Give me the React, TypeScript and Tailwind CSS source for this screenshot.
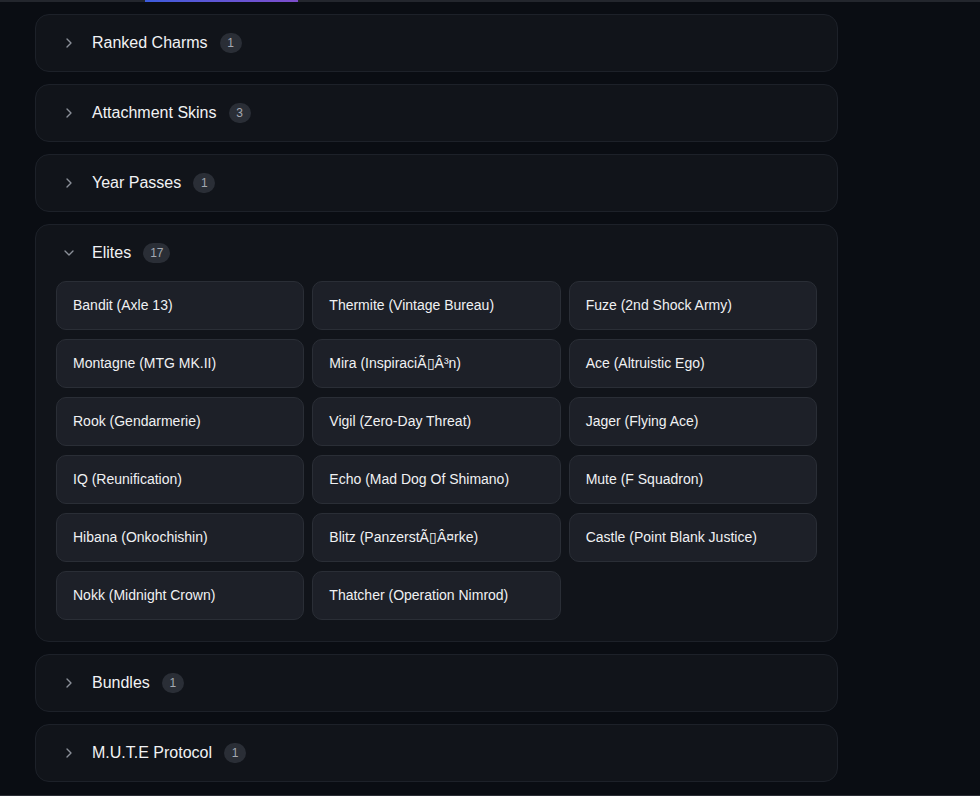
import { ChevronDown, ChevronRight } from 'lucide-react'

interface Category {
  name: string
  items: string[]
  open?: boolean
}

const categories: Category[] = [
  { name: 'Ranked Charms', items: ['Champion Charm'] },
  { name: 'Attachment Skins', items: ['a', 'b', 'c'] },
  { name: 'Year Passes', items: ['Y9'] },
  {
    name: 'Elites',
    open: true,
    items: [
      'Bandit (Axle 13)',
      'Thermite (Vintage Bureau)',
      'Fuze (2nd Shock Army)',
      'Montagne (MTG MK.II)',
      'Mira (InspiraciÃ\u25AFÂ³n)',
      'Ace (Altruistic Ego)',
      'Rook (Gendarmerie)',
      'Vigil (Zero-Day Threat)',
      'Jager (Flying Ace)',
      'IQ (Reunification)',
      'Echo (Mad Dog Of Shimano)',
      'Mute (F Squadron)',
      'Hibana (Onkochishin)',
      'Blitz (PanzerstÃ\u25AFÂ¤rke)',
      'Castle (Point Blank Justice)',
      'Nokk (Midnight Crown)',
      'Thatcher (Operation Nimrod)',
    ],
  },
  { name: 'Bundles', items: ['x'] },
  { name: 'M.U.T.E Protocol', items: ['x'] },
]

function Section({ cat }: { cat: Category }) {
  return (
    <div className="rounded-[14px] border border-[#1d2129] bg-[#11141a]">
      <div className="flex h-[56px] items-center pl-[25px]">
        {cat.open ? (
          <ChevronDown className="h-[16px] w-[16px] text-[#8b9099]" strokeWidth={2} />
        ) : (
          <ChevronRight className="h-[16px] w-[16px] text-[#8b9099]" strokeWidth={2} />
        )}
        <span className="ml-[15px] text-[16px] text-[#f1f2f4]">{cat.name}</span>
        <span className="ml-[12px] flex h-[20px] min-w-[22px] items-center justify-center rounded-full bg-[#2a2e36] px-[7px] text-[12px] text-[#a4a9b2]">
          {cat.items.length}
        </span>
      </div>
      {cat.open && (
        <div className="grid grid-cols-3 gap-x-[8px] gap-y-[9px] px-[20px] pb-[21px]">
          {cat.items.map((item) => (
            <div
              key={item}
              className="flex h-[49px] items-center rounded-[10px] border border-[#2a2e36] bg-[#1d2028] px-[16px] text-[14px] text-[#f0f1f3]"
            >
              {item}
            </div>
          ))}
        </div>
      )}
    </div>
  )
}

export default function App() {
  return (
    <div
      className="flex h-[796px] flex-col overflow-hidden bg-[#0a0d13] text-white"
      style={{ fontFamily: '"Liberation Sans", Arial, sans-serif' }}
    >
      {/* tab strip underline */}
      <div className="relative h-[2px] shrink-0 bg-[#23262d]">
        <div className="absolute left-[145px] top-0 h-[2px] w-[153px] bg-gradient-to-r from-[#3b5bdb] to-[#7c4dcc]" />
      </div>
      <div className="box-content flex w-[803px] flex-1 flex-col gap-[12px] pl-[35px] pt-[12px]">
        {categories.map((cat) => (
          <Section key={cat.name} cat={cat} />
        ))}
      </div>
      <div className="h-[1px] shrink-0 bg-[#2a2d34]" />
    </div>
  )
}
